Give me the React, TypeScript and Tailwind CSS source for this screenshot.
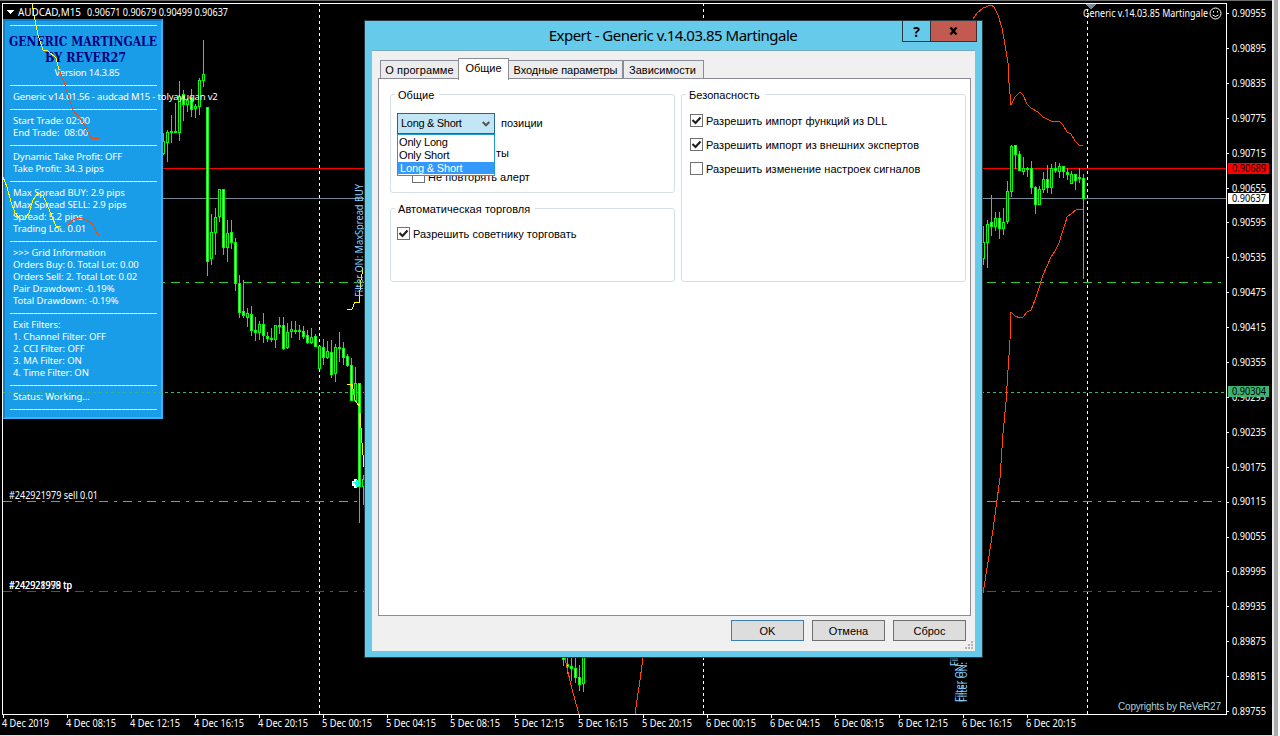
import type { ReactNode } from "react";
import clsx from "clsx";

const UP = false;
const DOWN = true;

// x, high, low, body top, body bottom, direction
type Candle = [number, number, number, number, number, boolean];

const CANDLES: Candle[] = [
  [163, 133, 155, 141, 154, UP],
  [167, 130, 162, 132, 143, UP],
  [171, 115, 143, 131, 133, UP],
  [175, 103, 133, 131, 133, UP],
  [179, 81, 141, 96, 133, UP],
  [183, 90, 121, 94, 105, DOWN],
  [187, 98, 112, 100, 105, UP],
  [191, 89, 117, 97, 110, DOWN],
  [195, 104, 118, 106, 109, UP],
  [199, 78, 115, 80, 107, UP],
  [203, 40, 87, 74, 81, UP],
  [207, 107, 276, 107, 262, DOWN],
  [211, 214, 265, 232, 259, UP],
  [215, 208, 255, 217, 233, UP],
  [219, 189, 222, 189, 217, UP],
  [223, 189, 255, 189, 248, DOWN],
  [227, 220, 262, 233, 248, UP],
  [231, 220, 249, 232, 243, DOWN],
  [235, 238, 291, 242, 284, DOWN],
  [239, 275, 318, 283, 313, DOWN],
  [243, 280, 318, 311, 316, DOWN],
  [247, 308, 327, 313, 318, UP],
  [251, 306, 336, 314, 331, DOWN],
  [255, 317, 341, 330, 333, DOWN],
  [259, 321, 340, 324, 333, UP],
  [263, 313, 343, 324, 336, DOWN],
  [267, 332, 342, 336, 339, DOWN],
  [271, 328, 342, 338, 340, UP],
  [275, 325, 348, 325, 340, UP],
  [279, 317, 334, 325, 327, UP],
  [283, 317, 350, 325, 349, DOWN],
  [287, 323, 349, 332, 348, UP],
  [291, 321, 338, 329, 332, UP],
  [295, 321, 334, 330, 332, DOWN],
  [299, 325, 340, 330, 332, DOWN],
  [303, 326, 339, 331, 337, DOWN],
  [307, 330, 344, 335, 343, DOWN],
  [311, 328, 344, 337, 343, UP],
  [315, 334, 347, 336, 347, DOWN],
  [319, 346, 369, 346, 369, UP],
  [323, 339, 365, 347, 358, DOWN],
  [327, 341, 359, 351, 358, UP],
  [331, 340, 378, 352, 375, DOWN],
  [335, 344, 382, 347, 374, UP],
  [339, 332, 362, 347, 349, UP],
  [343, 342, 365, 348, 358, DOWN],
  [347, 354, 367, 356, 366, DOWN],
  [351, 358, 401, 365, 401, DOWN],
  [355, 367, 402, 383, 401, UP],
  [359, 383, 523, 383, 487, DOWN],
  [363, 475, 505, 479, 487, UP],
  [563, 650, 666, 652, 660, DOWN],
  [567, 650, 674, 664, 667, DOWN],
  [571, 650, 681, 666, 669, DOWN],
  [575, 650, 683, 668, 678, DOWN],
  [579, 665, 691, 677, 685, DOWN],
  [583, 650, 692, 652, 684, UP],
  [983, 226, 265, 242, 259, UP],
  [987, 220, 268, 224, 243, UP],
  [991, 195, 236, 222, 227, DOWN],
  [995, 212, 231, 218, 227, UP],
  [999, 212, 239, 218, 229, DOWN],
  [1003, 208, 235, 222, 229, UP],
  [1007, 181, 224, 191, 222, UP],
  [1011, 145, 197, 146, 192, UP],
  [1015, 145, 169, 145, 155, DOWN],
  [1019, 151, 171, 154, 171, DOWN],
  [1023, 157, 175, 168, 172, UP],
  [1027, 167, 177, 168, 170, UP],
  [1031, 161, 194, 168, 188, DOWN],
  [1035, 186, 214, 187, 205, DOWN],
  [1039, 186, 205, 189, 205, UP],
  [1043, 172, 193, 179, 190, UP],
  [1047, 165, 193, 179, 188, DOWN],
  [1051, 164, 194, 168, 188, UP],
  [1055, 162, 173, 168, 171, DOWN],
  [1059, 163, 178, 166, 172, UP],
  [1063, 166, 178, 166, 172, DOWN],
  [1067, 168, 180, 172, 175, DOWN],
  [1071, 171, 184, 174, 184, UP],
  [1075, 174, 190, 174, 181, DOWN],
  [1079, 168, 183, 177, 179, DOWN],
  [1083, 174, 279, 178, 199, DOWN],
];

const ORANGE_LINES = [
  "973,19 977,13 983,8 991,5 994,7 998,15 1002,28 1005,45 1008,63 1009,83 1011,105 1015,97 1020,92 1023,95 1027,104 1031,108 1038,112 1043,117 1051,121 1059,121 1063,125 1067,132 1071,134 1075,141 1079,145 1083,146",
  "1083,209 1077,209 1071,214 1067,217 1065,224 1063,230 1059,243 1055,251 1051,257 1047,266 1043,275 1039,288 1035,300 1031,310 1027,312 1023,317 1020,318 1015,316 1011,312 1010,340 1008,370 1006,402 1003,433 1000,478 997,500 993,530 988,562 983,593",
  "565,658 567,668 571,685 575,700 579,714",
  "643,658 640,680 637,700 635,714",
];

const YELLOW_LINES = [
  "347,309 352,309 355,302 359,303 360,290 361,280 363,268",
  "347,384 352,384 355,400 359,406 360,413 362,443 364,467",
];

const PRICES = Array.from({ length: 21 }, (_, i) => (0.90955 - i * 0.0006).toFixed(5));

const TIMES = [
  "4 Dec 2019", "4 Dec 08:15", "4 Dec 12:15", "4 Dec 16:15", "4 Dec 20:15", "5 Dec 00:15",
  "5 Dec 04:15", "5 Dec 08:15", "5 Dec 12:15", "5 Dec 16:15", "5 Dec 20:15", "6 Dec 00:15",
  "6 Dec 04:15", "6 Dec 08:15", "6 Dec 12:15", "6 Dec 16:15", "6 Dec 20:15",
];

interface LabelProps {
  x: number;
  y: number;
  w: number;
  fill?: string;
  children: string;
}

// y is the vertical centre of the digits
function Label({ x, y, w, fill = "#ffffff", children }: LabelProps) {
  return (
    <text x={x} y={Math.round(y + 3.5)} fill={fill} textLength={w} lengthAdjust="spacingAndGlyphs">
      {children}
    </text>
  );
}

function PriceTag({ y, price, bg, fg }: { y: number; price: string; bg: string; fg: string }) {
  return (
    <g>
      <rect x="1228" y={y} width="41" height="11" fill={bg} />
      <Label x={1232} y={y + 5} w={34} fill={fg}>{price}</Label>
    </g>
  );
}

function Chart() {
  return (
    <svg
      width="1280"
      height="736"
      viewBox="0 0 1280 736"
      className="block font-['Noto_Sans',sans-serif] text-[10px]"
    >
      <rect width="1280" height="736" fill="#000000" />

      <g shapeRendering="crispEdges">
        {/* Window edges */}
        <rect width="1272" height="1" fill="#6d6d6d" />
        <rect x="1272" width="2" height="736" fill="#e9e9e9" />
        <rect x="1274" width="4" height="736" fill="#ababab" />
        <rect x="1278" width="2" height="736" fill="#ffffff" />
        <rect y="735" width="1274" height="1" fill="#dedede" />

        {/* Chart frame */}
        <rect x="2" y="3" width="1225" height="1" fill="#ffffff" />
        <rect x="2" y="3" width="1" height="712" fill="#ffffff" />
        <rect x="1226" y="3" width="1" height="712" fill="#ffffff" />
        <rect x="2" y="714" width="1225" height="1" fill="#ffffff" />

        {/* Day separators */}
        {[319, 703, 1087].map((x) => (
          <path key={x} d={`M${x}.5 3V714`} stroke="#ffffff" strokeDasharray="3 3" />
        ))}

        {/* Levels */}
        <path d="M3 168.5H1226" stroke="#ff0000" />
        <path d="M3 198.5H1226" stroke="#778899" />
        <path d="M3 282.5H1222" stroke="#32cd32" strokeDasharray="9 6 3 6" />
        <path d="M3 501.5H1222" stroke="#32cd32" strokeDasharray="9 6 3 6" />
        <path d="M3 591.5H1222" stroke="#f01010" strokeDasharray="9 6 3 6" />
        <path d="M3 392.5H1226" stroke="#3cb371" strokeDasharray="3 3" />

        {CANDLES.map(([x, high, low, top, bottom, down]) => (
          <g key={x}>
            <rect x={x} y={high} width="1" height={low - high} fill="#00ff00" />
            <rect x={x - 1} y={top} width="3" height={bottom - top} fill="#00ff00" />
            <rect
              x={x}
              y={top + 1}
              width="1"
              height={Math.max(bottom - top - 2, 0)}
              fill={down ? "#ffffff" : "#000000"}
            />
          </g>
        ))}

        {ORANGE_LINES.map((points) => (
          <polyline key={points} points={points} fill="none" stroke="#ff4500" />
        ))}
        {YELLOW_LINES.map((points) => (
          <polyline key={points} points={points} fill="none" stroke="#ffff00" />
        ))}

        {/* Axis ticks */}
        {PRICES.map((p, i) => (
          <rect key={p} x="1227" y={Math.round(13 + i * 34.9)} width="2" height="1" fill="#ffffff" />
        ))}
        {TIMES.map((t, i) => (
          <rect key={t} x={3 + i * 64} y="715" width="1" height="3" fill="#ffffff" />
        ))}

        <path d="M1085 4H1096L1090.5 9.5Z" fill="#778899" />
        <path d="M6 10H14L10 14Z" fill="#ffffff" />

        {/* Order arrow */}
        <path d="M352 481h2v-2h3l4 4.5-4 4.5h-3v-2h-2z" fill="#ffffff" />
        <path d="M353 482h3v-2h1l4 3.5-4 3.5h-1v-2h-1v-2h-2z" fill="#00ffff" />
      </g>

      <Label x={18} y={12} w={63}>AUDCAD,M15</Label>
      <Label x={87} y={12} w={141}>0.90671 0.90679 0.90499 0.90637</Label>
      <Label x={1083} y={13} w={125}>Generic v.14.03.85 Martingale</Label>
      <g fill="none" stroke="#ffffff">
        <circle cx="1215.5" cy="13.5" r="5.5" />
        <path d="M1212.5 15q3 3 6 0M1213.5 11v1.5M1217.5 11v1.5" />
      </g>

      {PRICES.map((p, i) => (
        <Label key={p} x={1232} y={13.65 + i * 34.88} w={34}>{p}</Label>
      ))}
      <PriceTag y={163} price="0.90689" bg="#ff0000" fg="#000000" />
      <PriceTag y={193} price="0.90637" bg="#ffffff" fg="#000000" />
      <PriceTag y={386} price="0.90304" bg="#3cb371" fg="#000000" />

      {TIMES.map((t, i) => (
        <Label key={t} x={2 + i * 64} y={723.4} w={i === 0 ? 47 : 50}>{t}</Label>
      ))}

      <Label x={9} y={495.4} w={89}>#242921979 sell 0.01</Label>
      <Label x={9} y={585.4} w={63}>#242921979 tp</Label>
      <Label x={9} y={585.4} w={63}>#242928998 tp</Label>

      <g fill="#87cefa">
        <text transform="translate(362.5 297) rotate(-90)" textLength="113" lengthAdjust="spacingAndGlyphs">Filter ON: MaxSpread BUY</text>
        <text transform="translate(958 666) rotate(-90)" textLength="40" lengthAdjust="spacingAndGlyphs">Filter ON:</text>
        <text transform="translate(963 702) rotate(-90)" textLength="40" lengthAdjust="spacingAndGlyphs">Filter ON:</text>
        <text transform="translate(967 702) rotate(-90)" textLength="40" lengthAdjust="spacingAndGlyphs">Filter ON:</text>
      </g>
      <text x="1118" y="710" fill="#a9cfdc" textLength="103" className="font-['Liberation_Sans',sans-serif] text-[10px]">
        Copyrights by ReVeR27
      </text>
    </svg>
  );
}

const INFO_ROWS = [
  "-", "Generic v14.01.56 - audcad M15 - tolyayugan v2", "-",
  "Start Trade: 02:00", "End Trade:  08:00", "-",
  "Dynamic Take Profit: OFF", "Take Profit: 34.3 pips", "-",
  "Max Spread BUY: 2.9 pips", "Max Spread SELL: 2.9 pips", "Spread: 5.2 pips", "Trading Lot: 0.01", "-",
  ">>> Grid Information", "Orders Buy: 0. Total Lot: 0.00", "Orders Sell: 2. Total Lot: 0.02",
  "Pair Drawdown: -0.19%", "Total Drawdown: -0.19%", "-",
  "Exit Filters:", "1. Channel Filter: OFF", "2. CCI Filter: OFF", "3. MA Filter: ON", "4. Time Filter: ON", "-",
  "Status: Working...", "-",
];

function Divider() {
  return (
    <div className="h-3 flex items-center pl-[5px]">
      <div className="w-[147px] h-px bg-[repeating-linear-gradient(90deg,#ffffff_0_3px,#bfe4fa_3px_4px)]" />
    </div>
  );
}

function InfoPanel() {
  return (
    <div className="absolute left-[3px] top-[19px] w-[160px] h-[400px] box-border bg-[#1a9de8] border-2 border-t-[#0c80c8] border-l-[#0c80c8] border-r-[#38b4fc] border-b-[#38b4fc] font-['Noto_Sans',sans-serif] text-[9.5px] text-white">
      <div className="-mt-0.5">
        <Divider />
        <svg width="156" height="36" className="block overflow-visible font-['DejaVu_Serif',serif] font-bold" fill="#00007c">
          <text x="4" y="14.5" fontSize="13.5" textLength="148" lengthAdjust="spacingAndGlyphs">GENERIC MARTINGALE</text>
          <text x="40" y="31" fontSize="13.5" textLength="81" lengthAdjust="spacingAndGlyphs">BY REVER27</text>
        </svg>
        <div className="h-3 leading-3 text-center pl-2 tracking-[-0.2px]">Version 14.3.85</div>
        {INFO_ROWS.map((row, i) =>
          row === "-" ? (
            <Divider key={i} />
          ) : (
            <div
              key={i}
              className={clsx("h-3 leading-3 pl-2 whitespace-pre", i === 1 ? "tracking-[-0.17px]" : "tracking-[-0.07px]")}
            >
              {row}
            </div>
          )
        )}
      </div>
      {/* Indicator lines running over the panel */}
      <svg
        width="160"
        height="418"
        viewBox="3 3 160 418"
        className="absolute -left-0.5 -top-[18px]"
        fill="none"
        shapeRendering="crispEdges"
      >
        <polyline stroke="#ffff00" points="32,4 35,20 38,35 43,50 48,51 56,58 59,70" />
        <polyline stroke="#ff4500" points="59,70 63,79 68,95 73,110 80,118 85,126 91,138 99,139" />
        <polyline stroke="#ffff00" points="3,177 7,187 11,202 15,213 20,219 25,219 29,213 33,200 38,193 43,196 47,204 52,217 56,226 60,227" />
        <polyline stroke="#ff4500" points="60,227 63,228 68,225 73,220 80,218 86,220 92,223 95,229 99,236" />
        <path d="M3 392.5H163" stroke="#3cb371" strokeDasharray="3 3" />
      </svg>
    </div>
  );
}

function Group({ title, className, children }: { title: string; className: string; children?: ReactNode }) {
  return (
    <fieldset className={clsx("relative box-border rounded-[3px] border border-[#d5dfe5]", className)}>
      <span className="absolute -top-2 left-1 h-4 leading-4 bg-white pl-[3px] pr-[5px] tracking-[0.05px]">{title}</span>
      {children}
    </fieldset>
  );
}

function Check({ label, checked, className }: { label: string; checked?: boolean; className?: string }) {
  return (
    <div className={clsx("flex items-center gap-[3px] h-3.5 leading-3.5 whitespace-nowrap tracking-[0.04px]", className)}>
      <span className="w-[13px] h-[13px] -mt-px shrink-0 border border-[#707070] bg-white">
        {checked && (
          <svg width="11" height="11" viewBox="0 0 11 11" fill="none" stroke="#212121" strokeWidth="2.2">
            <path d="M1.5 5l3 3 5-5.5" />
          </svg>
        )}
      </span>
      {label}
    </div>
  );
}

function DialogButton({ label, primary }: { label: string; primary?: boolean }) {
  return (
    <button
      className={clsx(
        "w-[73px] h-[21px] leading-[20px] border bg-[#dddddd] text-center",
        primary ? "border-[#3c7fb1]" : "border-[#707070]"
      )}
    >
      {label}
    </button>
  );
}

const TABS = [
  { label: "О программе", width: "w-[79px]", text: "tracking-[0.1px]" },
  { label: "Общие", width: "w-[51px]", text: "" },
  { label: "Входные параметры", width: "w-[115px]", text: "tracking-[-0.05px]" },
  { label: "Зависимости", width: "w-[81px]", text: "pr-0.5" },
];

function ExpertDialog() {
  return (
    <div className="absolute left-[364px] top-[20px] w-[619px] h-[638px] box-border border border-[#29383e] bg-[#66caea] flex flex-col pl-[7px] pr-[7px] pb-1.5 font-['Liberation_Sans',sans-serif] text-[11px] text-black">
      {/* Title bar */}
      <div className="h-[29px] shrink-0 flex items-start">
        <div className="flex-1 pl-[72px] pt-0.5 h-[29px] leading-6 text-center text-[15px] font-['Noto_Sans',sans-serif] tracking-[-0.5px]">
          Expert - Generic v.14.03.85 Martingale
        </div>
        <button className="w-[29px] h-[21px] border border-t-0 border-[#29383e] flex items-center justify-center font-['Open_Sans',sans-serif] text-[14px] font-bold">
          ?
        </button>
        <button className="w-[46px] h-[21px] -mr-0.5 border border-t-0 border-l-0 border-[#4a2826] bg-[#c35a51] flex items-center justify-center">
          <svg width="9" height="8" viewBox="0 0 9 8" stroke="#000000" strokeWidth="2.4">
            <path d="M1.5 0.5l6 7M7.5 0.5l-6 7" />
          </svg>
        </button>
      </div>

      <div className="relative flex-1 border-t border-[#78aabd] bg-[#f0f0f0] px-1.5 pt-[7px] flex flex-col">
        {/* Tabs */}
        <div className="relative z-10 flex items-end h-[22px] pl-0.5 -mb-0.5 shrink-0">
          {TABS.map((tab, i) => (
            <div
              key={tab.label}
              className={clsx(
                "box-border border border-[#8b8c95] border-b-0 text-center whitespace-nowrap",
                tab.width,
                tab.text,
                i === 1 ? "h-[22px] leading-[19px] bg-white" : "h-[18px] leading-[18px] mb-0.5 bg-[#ececec]",
                i !== 0 && i !== 3 && "-ml-px"
              )}
            >
              {tab.label}
            </div>
          ))}
        </div>

        {/* Tab page */}
        <div className="h-[538px] w-[593px] shrink-0 box-border border border-[#8b8c95] bg-white pl-[11px] pt-[15px] flex gap-1.5">
          <div className="flex flex-col gap-[15px]">
            <Group title="Общие" className="w-[285px] h-[99px] pl-1.5 pt-[18px]">
              <div className="flex items-center gap-1.5">
                <div className="relative w-[98px] h-[21px] box-border border border-[#2a6390] bg-[#c3e6f6] pl-[3px] pr-1 flex items-center justify-between tracking-[-0.3px]">
                  Long &amp; Short
                  <svg width="8" height="6" viewBox="0 0 8 6" fill="none" stroke="#555555" strokeWidth="2">
                    <path d="M0.7 1l3.3 3.3L7.3 1" />
                  </svg>
                  {/* Open list */}
                  <ul className="absolute z-20 -left-px top-5 w-[98px] h-[42px] box-border border border-[#1f9ccb] bg-white pt-px leading-[13px] tracking-[-0.15px]">
                    <li className="h-[13px] pl-px">Only Long</li>
                    <li className="h-[13px] pl-px">Only Short</li>
                    <li className="h-3 pl-0.5 bg-[#3399ff] text-white">Long &amp; Short</li>
                  </ul>
                </div>
                позиции
              </div>
              <div className="h-4 leading-4 mt-[11px] pl-[99px]">ты</div>
              <Check label="Не повторять алерт" className="mt-[9px] pl-[15px]" />
            </Group>
            <Group title="Автоматическая торговля" className="w-[285px] h-[74px] pl-1.5 pt-[18px]">
              <Check label="Разрешить советнику торговать" checked />
            </Group>
          </div>
          <Group title="Безопасность" className="w-[285px] h-[188px] pl-2 pt-[19px] flex flex-col gap-2.5">
            <Check label="Разрешить импорт функций из DLL" checked />
            <Check label="Разрешить импорт из внешних экспертов" checked />
            <Check label="Разрешить изменение настроек сигналов" />
          </Group>
        </div>

        {/* Buttons */}
        <div className="flex justify-end gap-2 pt-1 pr-[3px]">
          <DialogButton label="OK" primary />
          <DialogButton label="Отмена" />
          <DialogButton label="Сброс" />
        </div>
        <svg width="8" height="8" viewBox="0 0 8 8" fill="#b4b4b4" className="absolute right-[2px] bottom-[2px]">
          <path d="M6 0h2v2h-2zM6 3h2v2h-2zM6 6h2v2h-2zM3 3h2v2h-2zM3 6h2v2h-2zM0 6h2v2h-2z" />
        </svg>
      </div>
    </div>
  );
}

export default function App() {
  return (
    <div className="relative w-[1280px] h-[736px] overflow-hidden bg-black">
      <Chart />
      <InfoPanel />
      <ExpertDialog />
    </div>
  );
}
